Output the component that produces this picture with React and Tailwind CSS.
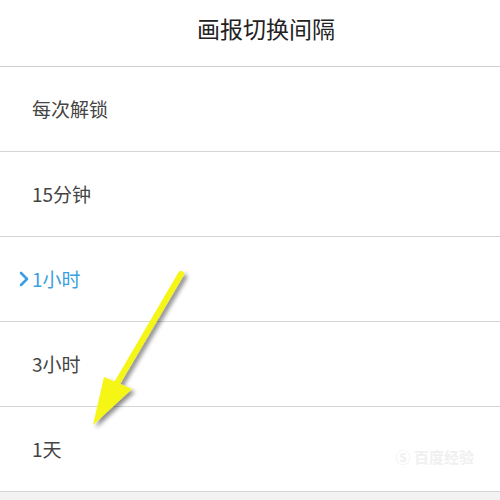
import React from "react";

const rows = [
  { label: "每次解锁" },
  { label: "15分钟" },
  { label: "1小时", active: true },
  { label: "3小时" },
  { label: "1天" },
];

export default function App() {
  return (
    <div
      className="relative w-[500px] h-[500px] overflow-hidden bg-[#f2f2f2]"
      style={{ fontFamily: '"Noto Sans CJK SC", "Noto Sans", sans-serif' }}
    >
      <div className="bg-white">
        <div className="h-[67px] flex items-start justify-center pt-[12px] pl-[32px] border-b border-[#cfcfcf]">
          <span className="text-[23px] text-[#222] leading-[32px]">画报切换间隔</span>
        </div>
        {rows.map((r, i) => (
          <div
            key={i}
            className="h-[85px] flex items-center border-b border-[#d4d4d4] relative"
          >
            {r.active && (
              <span className="absolute left-[18px] leading-none">
                <svg width="12" height="16" viewBox="0 0 12 16">
                  <path d="M3 2 L9 8 L3 14" stroke="#3a9fe2" strokeWidth="2.6" fill="none" strokeLinecap="round" strokeLinejoin="round" />
                </svg>
              </span>
            )}
            <span
              className={`pl-[32px] text-[19px] ${r.active ? "text-[#3a9fe2]" : "text-[#444]"}`}
            >
              {r.label}
            </span>
          </div>
        ))}
      </div>
      <div className="absolute right-[26px] top-[446px] text-[15px] text-[#f0f0f0] font-bold">
        Ⓢ 百度经验
      </div>
      <svg className="absolute left-0 top-0" width="500" height="500" viewBox="0 0 500 500">
        <defs>
          <filter id="sh" x="-20%" y="-20%" width="140%" height="140%">
            <feDropShadow dx="3" dy="3" stdDeviation="2" floodColor="#000" floodOpacity="0.45" />
          </filter>
        </defs>
        <g filter="url(#sh)">
          <line x1="181" y1="274" x2="116" y2="385" stroke="#f5f514" strokeWidth="6" strokeLinecap="round" />
          <polygon points="93,425 104,377 132,389" fill="#f5f514" />
        </g>
      </svg>
    </div>
  );
}
